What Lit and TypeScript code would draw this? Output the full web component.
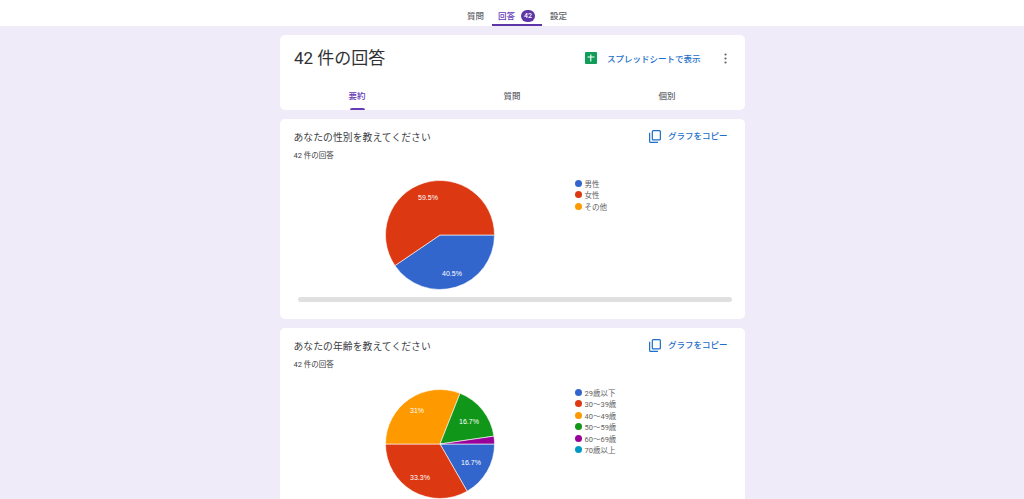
import { LitElement, html, css, svg } from "lit";
import { customElement } from "lit/decorators.js";

const C = ["#3366cc", "#dc3912", "#ff9900", "#109618", "#990099", "#0099c6"];
const R = 54.5;
const pt = (deg: number, r = R) => {
  const a = (deg * Math.PI) / 180;
  return [60 + r * Math.sin(a), 60 - r * Math.cos(a)];
};

interface Lab { t: string; x: number; y: number }
interface Q { title: string; legend: string[]; vals: number[]; labels: Lab[]; scroll: boolean }

const QS: Q[] = [
  {
    title: "あなたの性別を教えてください",
    legend: ["男性", "女性", "その他"],
    vals: [40.5, 59.5],
    labels: [{ t: "59.5%", x: 48, y: 22 }, { t: "40.5%", x: 72, y: 98 }],
    scroll: true,
  },
  {
    title: "あなたの年齢を教えてください",
    legend: ["29歳以下", "30〜39歳", "40〜49歳", "50〜59歳", "60〜69歳", "70歳以上"],
    vals: [16.7, 33.3, 31, 16.7, 2.3],
    labels: [
      { t: "31%", x: 37, y: 26 },
      { t: "16.7%", x: 89, y: 37 },
      { t: "16.7%", x: 91, y: 78 },
      { t: "33.3%", x: 40, y: 93 },
    ],
    scroll: false,
  },
];

@customElement("app-root")
export class AppRoot extends LitElement {
  static styles = css`
    :host {
      display: block;
      height: 499px;
      overflow: hidden;
      background: #f0ebf8;
      font-family: "Roboto", "Noto Sans CJK JP", sans-serif;
      color: #3c3c3c;
    }
    .top {
      height: 26px;
      background: #fff;
      display: flex;
      justify-content: center;
      padding-left: 10px;
      font-size: 8.5px;
      color: #5f6368;
    }
    .ttab {
      display: flex;
      align-items: center;
      gap: 6px;
      padding: 3px 6px 0;
      box-sizing: border-box;
      height: 26px;
      font-weight: 500;
    }
    .ttab.on {
      color: #673ab7;
      border-bottom: 2px solid #5e35a8;
      padding-top: 5px;
      width: 50px;
      margin: 0 2px;
    }
    .badge {
      background: #5e35a8;
      color: #fff;
      font-size: 7px;
      font-weight: 500;
      width: 14px;
      height: 12px;
      margin-top: 2px;
      border-radius: 6px;
      display: flex;
      align-items: center;
      justify-content: center;
    }
    .col {
      width: 465px;
      margin: 9px auto 0;
      display: flex;
      flex-direction: column;
      gap: 9px;
    }
    .card {
      background: #fff;
      border-radius: 5px;
      box-sizing: border-box;
    }
    .head {
      height: 75px;
      display: flex;
      flex-direction: column;
    }
    .hrow {
      height: 47px;
      display: flex;
      align-items: center;
      padding: 0 14px;
      box-sizing: border-box;
    }
    .htitle {
      font-size: 17px;
      color: #303134;
      flex: 1;
      padding-bottom: 5px;
      padding-left: 0.5px;
    }
    .link {
      font-size: 8.5px;
      font-weight: 500;
      color: #1b6ec9;
      white-space: nowrap;
      display: flex;
      align-items: center;
    }
    .hlink { margin-bottom: 2px; }
    .sheet { margin-right: 9.5px; display: block; }
    .kebab { margin-left: 23px; margin-right: 4px; display: block; }
    .tabs {
      flex: 1;
      display: grid;
      grid-template-columns: repeat(3, 1fr);
    }
    .tab {
      display: flex;
      flex-direction: column;
      align-items: center;
      font-size: 8.5px;
      font-weight: 500;
      color: #5f6368;
      padding-top: 8px;
      box-sizing: border-box;
      height: 28px;
      line-height: 13px;
    }
    .tab.on { color: #673ab7; }
    .bar {
      width: 15px;
      height: 2px;
      border-radius: 2px 2px 0 0;
      background: #673ab7;
      margin-top: auto;
    }
    .q {
      padding: 8px 17px 0 14px;
    }
    .q.tall { height: 200px; }
    .q.open { height: 260px; }
    .qhead {
      display: flex;
      align-items: center;
      justify-content: space-between;
      height: 17px;
      margin-bottom: 6px;
    }
    .qtitle {
      font-size: 9.8px;
      letter-spacing: 0.07px;
      color: #3c4043;
      margin-top: 2px;
    }
    .copy { margin-top: -2px; }
    .copy svg { margin: 3px 7px 0 0; display: block; }
    .sub {
      font-size: 7.5px;
      color: #3c4043;
      line-height: 12px;
    }
    .chart {
      display: flex;
      margin-left: 86px;
      margin-top: 13px;
    }
    .pie { display: block; flex: none; }
    .pie text {
      fill: #fff;
      font-size: 7px;
      text-anchor: middle;
      font-family: "Liberation Sans", sans-serif;
    }
    .legend {
      margin-left: 75px;
      padding-top: 2.5px;
      display: flex;
      flex-direction: column;
      font-size: 7.5px;
      color: #5f5f5f;
    }
    .li {
      display: flex;
      align-items: center;
      height: 11.5px;
      gap: 3px;
    }
    .dot {
      width: 7px;
      height: 7px;
      border-radius: 50%;
    }
    .scroll {
      height: 5px;
      background: #e0e0e0;
      border-radius: 3px;
      margin: 2px -4px 0 4px;
    }
  `;

  pie(vals: number[], labels: Lab[]) {
    let a = 90;
    return html`<svg class="pie" width="120" height="120" viewBox="0 0 120 120">
      ${vals.map((v, i) => {
        const sweep = (v / 100) * 360;
        const [x1, y1] = pt(a);
        const [x2, y2] = pt(a + sweep);
        a += sweep;
        return svg`<path d="M60 60L${x1} ${y1}A${R} ${R} 0 ${sweep > 180 ? 1 : 0} 1 ${x2} ${y2}Z" fill=${C[i]} stroke="#fff" stroke-width=".6"/>`;
      })}
      ${labels.map((l) => svg`<text x=${l.x} y=${l.y + 2.5}>${l.t}</text>`)}
    </svg>`;
  }

  render() {
    return html`
      <div class="top">
        <div class="ttab">質問</div>
        <div class="ttab on">回答<span class="badge">42</span></div>
        <div class="ttab">設定</div>
      </div>
      <div class="col">
        <div class="card head">
          <div class="hrow">
            <div class="htitle">42 件の回答</div>
            <div class="link hlink">
              <svg class="sheet" width="12" height="12" viewBox="0 0 12 12">
                <rect width="12" height="12" rx="1" fill="#0f9d58"/>
                <path d="M2.5 5h7M5.8 2.5v7" stroke="#fff" stroke-width="1.1" fill="none"/>
              </svg>
              スプレッドシートで表示
            </div>
            <svg class="kebab" width="3" height="11" viewBox="0 0 3 11">
              <circle cx="1.5" cy="1.5" r="1.1" fill="#5f6368"/>
              <circle cx="1.5" cy="5.5" r="1.1" fill="#5f6368"/>
              <circle cx="1.5" cy="9.5" r="1.1" fill="#5f6368"/>
            </svg>
          </div>
          <div class="tabs">
            <div class="tab on">要約<span class="bar"></span></div>
            <div class="tab">質問</div>
            <div class="tab">個別</div>
          </div>
        </div>
        ${QS.map(
          (q) => html`
            <div class="card q ${q.scroll ? "tall" : "open"}">
              <div class="qhead">
                <div class="qtitle">${q.title}</div>
                <div class="link copy">
                  <svg width="12" height="13" viewBox="0 0 13 14" fill="none" stroke="#1b6ec9" stroke-width="1.3">
                    <rect x="3.6" y="0.7" width="8.7" height="10" rx="1"/>
                    <path d="M0.7 3v9.3a1 1 0 0 0 1 1h8"/>
                  </svg>
                  グラフをコピー
                </div>
              </div>
              <div class="sub">42 件の回答</div>
              <div class="chart">
                ${this.pie(q.vals, q.labels)}
                <div class="legend">
                  ${q.legend.map(
                    (l, i) => html`<div class="li"><span class="dot" style="background:${C[i]}"></span>${l}</div>`
                  )}
                </div>
              </div>
              ${q.scroll ? html`<div class="scroll"></div>` : ""}
            </div>
          `
        )}
      </div>
    `;
  }
}
